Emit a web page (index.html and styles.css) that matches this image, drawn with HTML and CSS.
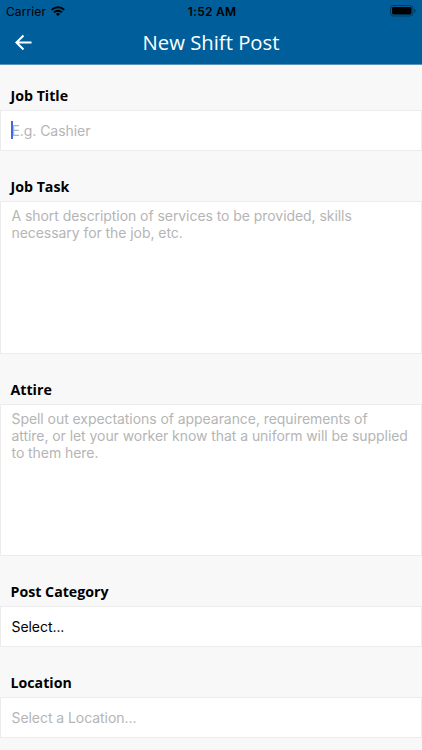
FILE: index.html
```html
<!DOCTYPE html>
<html lang="en">
<head>
    <meta charset="UTF-8">
    <meta name="viewport" content="width=device-width, initial-scale=1.0">
    <title>New Shift Post</title>
    <link rel="stylesheet" href="styles.css">
</head>
<body>
    <header>
        <div class="status-bar">
            <div class="carrier">
                <span>Carrier</span>
                <svg width="14" height="10" viewBox="0 0 14 10" fill="none" stroke="#000" stroke-width="2">
                    <path d="M0.7 3.9a8.9 8.9 0 0 1 12.6 0"/>
                    <path d="M3 6.4a5.6 5.6 0 0 1 8 0"/>
                    <path d="M7 10L4.9 7.9a3 3 0 0 1 4.2 0z" fill="#000" stroke="none"/>
                </svg>
            </div>
            <span class="time">1:52 AM</span>
            <svg class="battery" width="26" height="12" viewBox="0 0 26 12">
                <rect x="0.5" y="0.5" width="22.5" height="10.5" rx="3" fill="none" stroke="#000" stroke-opacity="0.4"/>
                <rect x="2" y="2" width="19.5" height="7.5" rx="1.4"/>
                <path d="M24.3 3.8v4a2.2 2.2 0 0 0 0-4z" fill-opacity="0.5"/>
            </svg>
        </div>
        <div class="nav-bar">
            <button class="back" aria-label="Back">
                <svg width="17" height="17" viewBox="0 0 18 18" fill="none" stroke="#fff" stroke-width="2.2">
                    <path d="M17.5 9H2M9 1.5L1.5 9L9 16.5"/>
                </svg>
            </button>
            <h1>New Shift Post</h1>
        </div>
    </header>
    <form class="shift-form">
        <label for="title">Job Title</label>
        <div class="title-field">
            <span class="caret"></span>
            <input type="text" id="title" placeholder="E.g. Cashier">
        </div>
        <label for="task">Job Task</label>
        <textarea id="task" placeholder="A short description of services to be provided, skills necessary for the job, etc."></textarea>
        <label for="attire">Attire</label>
        <textarea id="attire" placeholder="Spell out expectations of appearance, requirements of&#10;attire, or let your worker know that a uniform will be supplied to them here."></textarea>
        <label for="category">Post Category</label>
        <select id="category">
            <option>Select...</option>
        </select>
        <label for="location">Location</label>
        <input type="text" id="location" placeholder="Select a Location...">
    </form>
</body>
</html>
```
FILE: styles.css
```css
*{
    box-sizing: border-box;
}
body{
    margin: 0;
    height: 750px;
    overflow: hidden;
    background-color: #f8f8f8;
    font-family: Inter, sans-serif;
}
header{
    height: 65px;
    background-color: #005f9b;
    border-bottom: 1px solid #5b93bb;
}
.status-bar{
    display: grid;
    grid-template-columns: 1fr auto 1fr;
    align-items: center;
    height: 22px;
    padding: 0 6px;
    font-size: 12px;
}
.carrier{
    display: flex;
    align-items: center;
    gap: 5px;
    letter-spacing: 0.1px;
}
.time{
    padding-left: 2px;
    font-weight: 600;
    letter-spacing: 0.25px;
}
.battery{
    justify-self: end;
}
.nav-bar{
    display: grid;
    grid-template-columns: 46px 1fr 46px;
    align-items: center;
    height: 41px;
}
.back{
    display: flex;
    justify-content: center;
    padding: 0;
    border: none;
    background: none;
}
h1{
    margin: 0;
    padding-bottom: 1px;
    color: white;
    font: 400 20.3px/26px "Open Sans", sans-serif;
    text-align: center;
}
.shift-form{
    display: flex;
    flex-direction: column;
    padding-top: 21.4px;
}
label{
    height: 24px;
    padding: 0 10.5px;
    font: 700 14.2px/20px "Open Sans", sans-serif;
}
input, textarea, select{
    display: block;
    width: 100%;
    height: 41px;
    margin: 0 0 26px;
    padding: 0 10.5px;
    border: 1px solid #ececec;
    border-radius: 0;
    background-color: white;
    color: black;
    font: 14px/17px Inter, sans-serif;
    letter-spacing: -0.06px;
    outline: none;
    resize: none;
    appearance: none;
}
textarea{
    height: 152.5px;
    padding: 5px 6px 5px 10.5px;
}
::placeholder{
    color: #b5b5b5;
    opacity: 1;
}
.title-field{
    position: relative;
}
.caret{
    position: absolute;
    left: 11px;
    top: 11px;
    width: 2px;
    height: 18px;
    background-color: #4267e0;
}
```
